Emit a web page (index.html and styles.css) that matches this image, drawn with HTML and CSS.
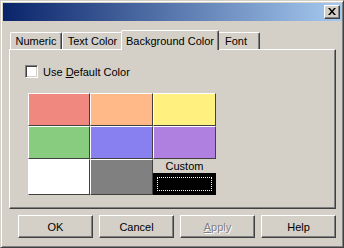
FILE: index.html
```html
<!DOCTYPE html>
<html lang="en">
<head>
  <meta charset="UTF-8">
  <title>Properties</title>
  <link rel="stylesheet" href="styles.css">
</head>
<body>
  <div class="window">
    <div class="titlebar">
      <button class="close-btn" title="Close">
        <svg width="8" height="7" viewBox="0 0 8 7">
          <path d="M0 0h2l2 2.5 2-2.5h2L5 3.5 8 7H6L4 4.5 2 7H0l3-3.5z" fill="#000"/>
        </svg>
      </button>
    </div>

    <div class="dialog">
      <div class="tabs">
        <div class="tab tab-numeric">Numeric</div>
        <div class="tab tab-text">Text Color</div>
        <div class="tab tab-bg active">Background Color</div>
        <div class="tab tab-font">Font</div>
      </div>

      <div class="panel">
        <label class="check-row">
          <span class="checkbox"></span>
          <span>Use <u>D</u>efault Color</span>
        </label>

        <div class="swatches">
          <div class="swatch" style="background: #f08880"></div>
          <div class="swatch" style="background: #ffb888"></div>
          <div class="swatch" style="background: #fff080"></div>
          <div class="swatch" style="background: #88cc80"></div>
          <div class="swatch" style="background: #8880f0"></div>
          <div class="swatch" style="background: #b080e0"></div>
          <div class="swatch" style="background: #ffffff"></div>
          <div class="swatch" style="background: #808080"></div>
          <div class="custom">
            <span class="custom-label">Custom</span>
            <button class="custom-btn"></button>
          </div>
        </div>
      </div>

      <div class="buttons">
        <button class="btn">OK</button>
        <button class="btn">Cancel</button>
        <button class="btn disabled"><u>A</u>pply</button>
        <button class="btn">Help</button>
      </div>
    </div>
  </div>
</body>
</html>
```

FILE: styles.css
```css
body {
  margin: 0;
  font-family: "Liberation Sans", Arial, sans-serif;
  font-size: 11px;
  color: #000;
  background: #d4d0c8;
}
button {
  font-family: inherit;
  font-size: 11px;
  color: #000;
}
.window {
  box-sizing: border-box;
  width: 344px;
  height: 248px;
  padding: 1px;
  background: #d4d0c8;
  border: 1px solid;
  border-color: #d4d0c8 #404040 #404040 #d4d0c8;
  box-shadow: inset 1px 1px #ffffff, inset -1px -1px #808080;
}
.titlebar {
  height: 18px;
  margin: 1px 0 0 1px;
  background: linear-gradient(to right, #0a246a, #a6caf0);
  display: flex;
  justify-content: flex-end;
  align-items: center;
  padding-right: 2px;
}
.close-btn {
  box-sizing: border-box;
  width: 16px;
  height: 14px;
  padding: 0;
  background: #d4d0c8;
  border: 1px solid;
  border-color: #ffffff #404040 #404040 #ffffff;
  box-shadow: inset -1px -1px #808080;
  display: flex;
  align-items: center;
  justify-content: center;
}
.close-btn svg {
  display: block;
  margin: 0 1px 1px 0;
}
.dialog {
  padding: 9px 5px 0 7px;
}
.tabs {
  display: flex;
  align-items: flex-end;
  height: 19px;
  padding-left: 1px;
}
.tab {
  box-sizing: border-box;
  height: 17px;
  padding-top: 1px;
  line-height: 15px;
  text-align: center;
  background: #d4d0c8;
  border: 1px solid #ffffff;
  border-bottom: none;
  border-right-color: #404040;
  border-radius: 2px 2px 0 0;
  box-shadow: inset -1px 0 #808080;
}
.tab-numeric { width: 52px; }
.tab-text { width: 61px; }
.tab-bg { width: 98px; }
.tab-font { width: 43px; text-align: left; padding-left: 7px; }
.tab.active {
  position: relative;
  z-index: 1;
  height: 20px;
  padding-top: 3px;
  margin: 0 -2px -1px -2px;
}
.panel {
  box-sizing: border-box;
  width: 327px;
  height: 160px;
  padding: 15px 0 0 15px;
  border: 1px solid;
  border-color: #ffffff #404040 #404040 #ffffff;
  box-shadow: inset -1px -1px #808080;
}
.check-row {
  display: flex;
  align-items: center;
  gap: 5px;
  height: 13px;
}
.checkbox {
  box-sizing: border-box;
  width: 13px;
  height: 13px;
  background: #ffffff;
  border: 1px solid;
  border-color: #808080 #ffffff #ffffff #808080;
  box-shadow: inset 1px 1px #404040, inset -1px -1px #d4d0c8;
}
.swatches {
  display: grid;
  grid-template-columns: 62px 63px 63px;
  grid-template-rows: 33px 33px 36px;
  margin: 15px 0 0 3px;
}
.swatch {
  border: 1px solid;
  border-color: #ffffff #404040 #404040 #ffffff;
}
.custom {
  display: flex;
  flex-direction: column;
}
.custom-label {
  height: 14px;
  line-height: 14px;
  text-align: center;
}
.custom-btn {
  flex: 1;
  padding: 0;
  background: #000000;
  border: 2px solid #000000;
  outline: 1px dotted #ffffff;
  outline-offset: -5px;
}
.buttons {
  display: flex;
  justify-content: flex-end;
  gap: 6px;
  margin-top: 6px;
  width: 327px;
}
.btn {
  box-sizing: border-box;
  width: 75px;
  height: 23px;
  padding: 0;
  background: #d4d0c8;
  border: 1px solid;
  border-color: #ffffff #404040 #404040 #ffffff;
  box-shadow: inset -1px -1px #808080;
}
.btn.disabled {
  color: #808080;
  text-shadow: 1px 1px #ffffff;
}
```
